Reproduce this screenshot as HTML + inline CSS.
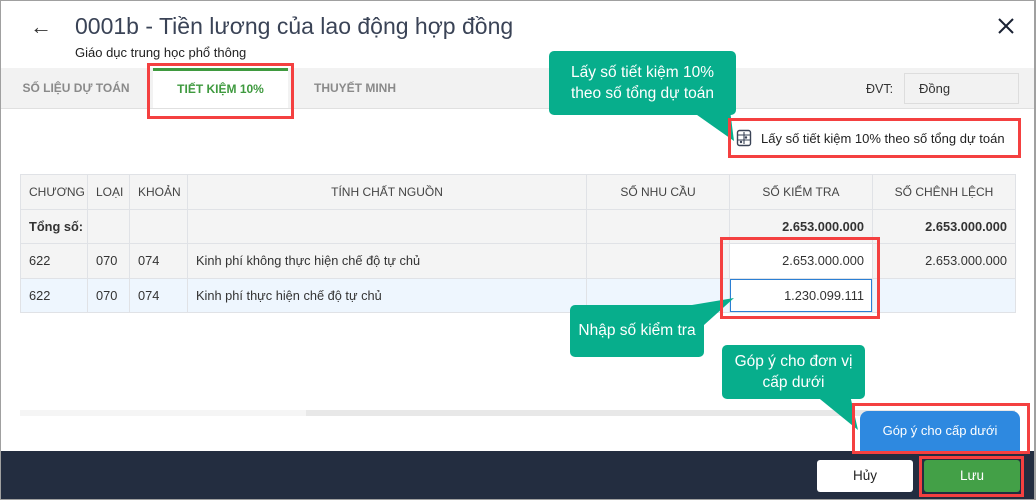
<!DOCTYPE html>
<html><head><meta charset="utf-8"><style>
*{margin:0;padding:0;box-sizing:border-box}
body{width:1036px;height:500px;position:relative;overflow:hidden;background:#fff;font-family:"Liberation Sans","DejaVu Sans",sans-serif;color:#333}
.a{position:absolute}
.frame{left:0;top:0;width:1036px;height:500px;border:1px solid #a0a0a0;border-right:2px solid #a0a0a0;z-index:50;pointer-events:none}
.title{left:75px;top:13px;font-size:23px;color:#3a4356}
.sub{left:75px;top:45px;font-size:13px;color:#222}
.tabs{left:1px;top:68px;width:1033px;height:41px;background:#f2f2f2;border-bottom:1px solid #e0e0e0}
.tab{top:68px;height:40px;line-height:40px;font-size:12px;font-weight:bold;color:#8a8a8a;text-align:center}
.red{border:3px solid #f44040;z-index:40}
table{position:absolute;left:20px;top:174px;border-collapse:collapse;table-layout:fixed;width:995px;font-size:12.8px;color:#333}
td{border:1px solid #e0e2e6;height:34.5px;padding:0 8px;white-space:nowrap;overflow:hidden}
tr.h td{background:#f4f4f4;color:#444;font-size:12px}
tr.t td{background:#f4f4f4;font-weight:bold}
tr.r1 td{background:#f4f4f4}
tr.r2 td{background:#eef6fe}
.r{text-align:right}
.tip{background:#07ae8c;color:#fff;border-radius:5px;font-size:15.5px;text-align:center;line-height:21px;z-index:30}
</style></head><body>
<div class="a frame"></div>
<div class="a" style="left:30px;top:14px;font-size:22px;color:#333">←</div>
<div class="a title">0001b - Tiền lương của lao động hợp đồng</div>
<div class="a sub">Giáo dục trung học phổ thông</div>
<svg class="a" style="left:997px;top:17px" width="18" height="18"><path d="M2 2L16 16M16 2L2 16" stroke="#1a2233" stroke-width="2"/></svg>
<div class="a tabs"></div>
<div class="a tab" style="left:15px;width:122px">SỐ LIỆU DỰ TOÁN</div>
<div class="a tab" style="left:153px;width:135px;background:#fff;color:#3f9a3f;border-top:3px solid #3f9a3f;line-height:36px">TIẾT KIỆM 10%</div>
<div class="a tab" style="left:290px;width:130px">THUYẾT MINH</div>
<div class="a red" style="left:147px;top:63px;width:147px;height:56px"></div>
<div class="a" style="left:866px;top:82px;font-size:12.5px;color:#333">ĐVT:</div>
<div class="a" style="left:904px;top:73px;width:115px;height:31px;border:1px solid #ddd;background:#f2f2f2;font-size:13px;line-height:29px;padding-left:14px;color:#333">Đồng</div>
<div class="a red" style="left:728px;top:118px;width:293px;height:40px"></div>
<svg class="a" style="left:736px;top:129px" width="16" height="18" viewBox="0 0 16 18"><rect x="1.5" y="1.5" width="13" height="15" rx="2" fill="none" stroke="#3a4356" stroke-width="1.4"/><path d="M1.5 6H14.5M1.5 11H14.5M8 3V15" stroke="#3a4356" stroke-width="1.1"/><circle cx="10" cy="8.5" r="1.2" fill="#3a4356"/><circle cx="5" cy="13" r="1.2" fill="#3a4356"/></svg>
<div class="a" style="left:761px;top:131px;font-size:13px;color:#222">Lấy số tiết kiệm 10% theo số tổng dự toán</div>
<table>
<colgroup><col style="width:67px"><col style="width:42px"><col style="width:58px"><col style="width:399px"><col style="width:143px"><col style="width:143px"><col style="width:143px"></colgroup>
<tr class="h"><td>CHƯƠNG</td><td>LOẠI</td><td>KHOẢN</td><td style="text-align:center">TÍNH CHẤT NGUỒN</td><td style="text-align:center">SỐ NHU CẦU</td><td style="text-align:center">SỐ KIỂM TRA</td><td style="text-align:center">SỐ CHÊNH LỆCH</td></tr>
<tr class="t"><td>Tổng số:</td><td></td><td></td><td></td><td></td><td class="r">2.653.000.000</td><td class="r">2.653.000.000</td></tr>
<tr class="r1"><td>622</td><td>070</td><td>074</td><td>Kinh phí không thực hiện chế độ tự chủ</td><td></td><td class="r" style="background:#fff">2.653.000.000</td><td class="r">2.653.000.000</td></tr>
<tr class="r2"><td>622</td><td>070</td><td>074</td><td>Kinh phí thực hiện chế độ tự chủ</td><td></td><td class="r" style="background:#fff;box-shadow:inset 0 0 0 1px #2b7fd4">1.230.099.111</td><td></td></tr>
</table>
<div class="a red" style="left:720px;top:237px;width:160px;height:82px"></div>
<div class="a" style="left:20px;top:410px;width:995px;height:6px;background:#f5f5f5"></div>
<div class="a" style="left:306px;top:410px;width:709px;height:6px;background:#e8e8e8"></div>
<div class="a tip" style="left:549px;top:51px;width:187px;height:64px;padding-top:11px">Lấy số tiết kiệm 10%<br>theo số tổng dự toán</div>
<svg class="a" style="left:690px;top:110px;z-index:30" width="50" height="35"><path d="M0 0L40 0L44 31Z" fill="#07ae8c"/></svg>
<div class="a tip" style="left:570px;top:305px;width:134px;height:52px;line-height:52px">Nhập số kiểm tra</div>
<svg class="a" style="left:670px;top:295px;z-index:30" width="70" height="35"><path d="M10 12L64 3L34 30Z" fill="#07ae8c"/></svg>
<div class="a" style="left:860px;top:411px;width:160px;height:41px;background:#2e89e0;border-radius:8px 8px 0 0;color:#fff;font-size:13px;line-height:40px;text-align:center">Góp ý cho cấp dưới</div>
<div class="a tip" style="left:722px;top:345px;width:143px;height:54px;padding-top:6px">Góp ý cho đơn vị<br>cấp dưới</div>
<svg class="a" style="left:815px;top:395px;z-index:30" width="50" height="40"><path d="M0 0L35 0L43 35Z" fill="#07ae8c"/></svg>
<div class="a red" style="left:852px;top:403px;width:178px;height:51px"></div>
<div class="a" style="left:1px;top:451px;width:1034px;height:49px;background:#232d40"></div>
<div class="a" style="left:817px;top:460px;width:96px;height:32px;background:#fff;border-radius:3px;font-size:13.5px;text-align:center;line-height:32px;color:#222">Hủy</div>
<div class="a" style="left:924px;top:460px;width:96px;height:32px;background:#43a047;border-radius:3px;font-size:13.5px;text-align:center;line-height:32px;color:#fff">Lưu</div>
<div class="a red" style="left:919px;top:456px;width:105px;height:41px"></div>
</body></html>
